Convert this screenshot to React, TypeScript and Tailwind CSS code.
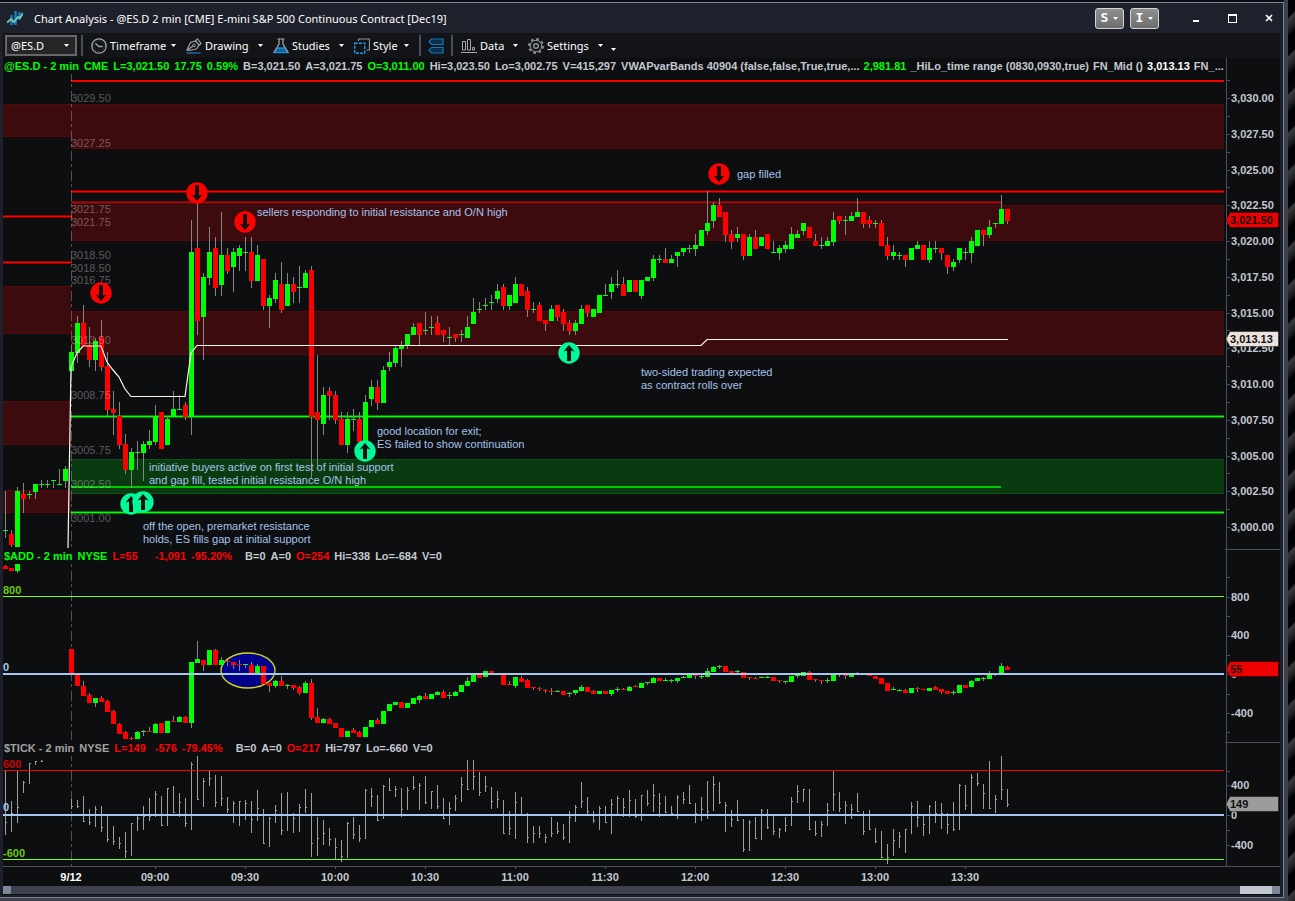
import React from 'react';

const BAR_STEP = 6;
const DAY_X = 71;

type Candle = { i: number; up: boolean; high: number; top: number; bottom: number; low: number };
type Bar = { i: number; high: number; low: number; close: number };

// Each entry is direction + high/top/bottom/low in chart coordinates
const parseCandles = (start: number, data: string): Candle[] =>
  data.trim().split(/\s+/).map((row, n) => {
    const [high, top, bottom, low] = row.slice(1).split(',').map(Number);
    return { i: start + n, up: row[0] === 'u', high, top, bottom, low };
  });

const parseBars = (start: number, data: string): Bar[] =>
  data.trim().split(/\s+/).map((row, n) => {
    const [high, low, close] = row.split(',').map(Number);
    return { i: start + n, high, low, close };
  });

const esCandles = parseCandles(-11, `
  u491,530,531,538 d530,534,545,547 u487,491,547,547 d483,494,499,513 u491,494,495,499 u484,484,492,499
  u480,484,485,488 u480,484,485,488 u480,480,481,488 u469,484,485,485 u466,469,481,488
  u345,352,371,371 u316,323,353,363 d305,323,346,346 d327,345,360,367 u338,341,360,371 d320,337,367,371
  d352,366,410,416 d391,409,413,435 d402,416,445,449 d434,444,470,474 u448,452,470,488 u441,452,453,470
  u441,444,453,481 u430,441,445,449 u405,416,442,445 d412,412,449,449 u416,419,445,445 u391,409,417,417
  u395,409,410,410 d402,405,417,420 u220,252,417,435 d203,248,321,335 u273,277,317,360 u227,252,278,285
  d237,248,288,296 u212,255,285,296 d248,255,271,274 u248,252,267,292 u245,248,256,271 u237,252,253,271
  d237,252,281,288 u245,255,281,281 d259,259,306,310 u295,298,306,328 u273,280,299,303 d262,284,310,313
  u273,284,306,306 d277,284,292,303 u266,287,288,303 u270,273,288,288 d266,270,417,478 d355,412,420,466
  u387,395,424,435 d387,391,396,420 d391,395,420,424 d412,419,445,445 u412,419,445,453 u409,419,420,431
  d412,419,442,442 u395,402,441,441 u380,387,399,406 d380,387,403,410 u366,370,403,403 u352,362,367,371
  u345,348,363,367 u341,346,349,367 u334,334,345,349 u323,327,335,335 d323,323,335,345 u312,330,331,335
  u316,327,328,335 d316,323,335,335 d330,330,335,342 u327,337,338,345 d334,334,338,342 u330,334,335,342
  u316,327,338,338 u298,312,324,324 u302,309,310,313 u298,305,306,310 u295,302,303,310 u284,291,299,303
  d284,287,306,310 u295,295,306,310 u277,284,303,303 d284,284,296,296 d287,291,310,317 u302,309,310,313
  d302,305,321,321 d320,320,324,331 u305,309,321,321 d305,305,317,321 d309,312,324,331 d320,323,331,335
  u320,323,331,335 u305,309,324,324 d305,305,313,317 u309,309,317,317 u295,295,313,313 u284,295,296,296
  u277,284,292,299 u270,284,285,288 d277,284,296,296 u280,280,292,292 d280,280,292,292 u280,280,296,299
  u277,277,281,281 u255,259,278,281 u255,259,260,263 d248,259,263,263 u255,259,263,263 u252,252,256,267
  u248,248,252,256 u245,248,249,253 u234,245,249,256 u230,230,246,246 u191,223,231,235 u202,205,221,228
  d198,205,217,217 d212,212,235,242 d230,234,242,249 u227,234,238,242 d234,234,256,260 u234,237,256,256
  d230,237,249,249 u237,237,246,246 d234,234,249,249 u241,252,253,253 u245,248,253,260 u241,245,249,253
  u227,234,249,249 u230,234,238,238 u223,223,231,235 d227,227,238,238 d234,241,246,246 u237,245,246,249
  u237,241,246,246 u212,220,242,246 d216,216,221,224 u216,220,221,235 u212,216,221,221 u198,212,217,217
  d212,212,224,228 d216,220,224,228 u220,223,224,228 d220,223,246,246 d237,245,256,260 u245,252,256,260
  u252,255,256,260 d255,255,260,267 u248,248,260,260 u241,245,249,249 d245,245,260,260 u241,248,260,263
  u241,248,249,253 d248,248,253,260 d255,255,267,274 u259,262,267,271 u248,248,260,263 u248,252,253,260
  u237,241,253,263 u230,230,246,246 d230,230,235,246 u220,227,235,238 u223,223,224,228 u195,209,224,224
  d209,209,221,224
`);

const addCandles = [
  ...parseCandles(-11, 'd565,566,569,569 d568,568,571,571 u563,563,571,573'),
  ...parseCandles(0, `
  d649,649,674,674 d674,675,686,686 d681,686,696,696 d693,695,703,703 u698,698,703,707 d696,698,702,702
  d700,701,712,712 d710,711,724,724 d723,724,734,734 d731,732,739,739 d737,738,739,740 u731,732,739,739
  u730,731,732,736 d727,731,732,732 u723,724,733,733 d723,723,733,733 u721,721,733,733 d716,721,722,722
  u716,717,722,722 d716,717,723,723 u662,662,723,728 u641,659,663,663 d660,660,665,671 u650,650,665,665
  d649,650,665,665 u657,660,665,665 d660,661,662,666 d662,662,665,669 d660,664,665,671 u664,664,665,668
  d662,665,673,673 u664,666,673,673 d666,666,684,684 d683,683,686,692 u680,681,686,688 d676,681,686,686
  u684,685,686,689 d685,685,688,690 d686,687,693,695 u681,683,693,693 d679,683,718,720 d708,717,723,723
  u718,719,723,723 d718,719,724,724 d723,723,728,728 d728,728,737,737 u731,731,737,737 d728,730,733,733
  d731,732,737,737 u727,727,737,737 u720,720,727,727 d718,720,724,724 u711,711,724,724 u704,704,711,711
  u702,702,705,705 d702,702,708,708 u703,703,708,708 u698,698,704,704 u695,696,700,703 d693,696,699,699
  u694,694,699,699 u691,692,695,695 d690,692,698,698 u692,695,696,699 u691,692,696,696 u685,685,692,692
  u677,681,686,686 u674,675,682,682 d675,675,678,678 u671,671,677,677 d671,671,674,674 d674,674,675,675
  d674,675,685,685 d681,684,685,685 u677,677,686,688 d676,678,682,682 d679,680,688,688 d687,687,688,690
  d687,688,689,691 d689,690,691,693 d688,691,692,695 u690,691,692,692 d691,691,695,695 u692,693,694,697
  u690,690,693,695 u685,687,691,691 d687,687,692,692 d690,691,694,694 u691,691,694,694 d691,691,694,694
  u690,690,694,696 u687,689,690,692 d688,689,690,690 u686,687,691,691 d685,686,687,687 u683,683,688,688
  u682,682,683,685 u677,678,683,683 d678,678,681,681 u678,680,681,681 u679,680,681,683 u678,678,681,683
  u676,677,678,678 u674,675,678,678 d675,675,676,679 u675,676,677,679 u668,671,677,677 u666,667,672,672
  u665,666,667,669 d666,666,672,672 d671,671,674,674 u670,671,672,673 d672,672,678,678 d677,677,678,680
  d677,678,679,679 u677,677,678,678 u676,677,678,678 d677,677,681,681 d680,680,681,683 u681,681,682,684
  u676,676,682,682 u675,675,676,678 u672,672,676,676 d671,672,680,680 d679,679,680,682 d680,680,681,684
  u678,680,681,683 u675,675,681,681 d674,674,675,677 d675,675,676,679 u675,675,677,677 u672,674,675,675
  u674,674,675,675 d675,675,676,676 d676,676,679,679 d678,678,684,684 d683,683,691,691 u687,689,690,690
  u689,690,691,691 d689,690,693,693 u688,688,693,693 d687,688,689,692 d689,689,690,690 u688,688,691,691
  d686,687,690,690 d689,689,692,694 d691,691,694,694 u690,692,693,695 u685,685,693,693 d685,685,688,688
  u680,681,687,687 u678,678,681,681 u677,678,679,681 u671,675,679,679 u674,674,675,676 u663,666,674,674
  d666,667,670,670
`),
];

const tickBars = [
  ...parseBars(-11, '771,835,822 801,832,813 771,823,807 781,793,782 763,784,763 761,765,761 760,762,761'),
  ...parseBars(0, `
  799,809,806 800,808,806 796,822,821 809,825,822 806,827,809 806,832,827 816,842,839 826,845,841 837,849,843
  832,858,851 823,856,823 816,831,818 806,830,816 798,821,816 791,817,794 796,826,825 788,826,788 786,813,812
  793,817,802 798,827,823 762,830,764 756,800,799 778,807,781 771,786,778 775,807,802 776,806,798 797,813,809
  801,823,803 801,826,801 800,820,803 801,833,819 790,821,808 809,844,843 817,847,818 805,823,810 793,835,830
  792,831,814 813,833,818 804,832,807 789,813,807 793,857,843 817,856,838 820,845,833 828,846,839 838,859,847
  840,862,856 822,858,823 817,839,834 825,842,838 789,839,790 788,807,796 795,821,820 785,819,786 778,791,790
  786,797,789 788,817,809 787,810,790 776,790,787 783,810,785 776,804,802 791,809,791 785,809,806 798,819,818
  802,825,808 795,811,798 777,802,784 760,790,789 760,790,776 772,796,792 776,792,786 787,809,801 791,808,799
  800,834,833 811,835,828 792,839,802 797,815,814 813,843,837 826,843,833 826,838,833 834,843,837 817,837,833
  822,834,831 824,840,837 811,843,817 805,822,807 782,808,801 797,815,811 811,823,820 806,830,808 806,823,822
  799,834,804 796,815,798 798,817,807 790,817,800 799,818,816 795,821,795 790,806,803 784,812,795 793,817,803
  796,813,812 806,814,813 795,819,797 792,804,799 785,804,803 803,823,813 797,821,809 781,819,811 776,811,784
  782,804,802 802,832,805 810,827,819 800,821,820 819,852,849 820,851,822 817,839,838 809,840,810 809,829,827
  815,835,831 828,838,829 817,832,825 797,826,801 785,803,791 789,802,789 789,830,829 821,836,833 821,837,824
  803,826,810 771,811,794 792,812,808 801,824,805 804,819,809 793,812,811 811,835,831 810,830,829 828,843,841
  831,858,857 844,864,857 829,856,840 832,848,836 829,853,829 802,834,806 801,827,817 815,836,824 805,834,806
  801,823,813 803,829,813 813,834,824 802,831,829 784,830,785 785,810,805 774,815,777 773,786,783 784,809,793
  761,809,808 795,813,799 756,800,789 789,807,804
`),
];

const levels = [
  { label: '3029.50', y: 102 },
  { label: '3027.25', y: 147 },
  { label: '3021.75', y: 213 },
  { label: '3021.75', y: 226 },
  { label: '3018.50', y: 259 },
  { label: '3018.50', y: 272 },
  { label: '3016.75', y: 284 },
  { label: '3013.50', y: 344 },
  { label: '3008.75', y: 399 },
  { label: '3005.75', y: 454 },
  { label: '3002.50', y: 488 },
  { label: '3001.00', y: 522 },
];

const notes = [
  { x: 257, y: 216, text: 'sellers responding to initial resistance and O/N high' },
  { x: 737, y: 178, text: 'gap filled' },
  { x: 641, y: 376, text: 'two-sided trading expected' },
  { x: 641, y: 389, text: 'as contract rolls over' },
  { x: 377, y: 435, text: 'good location for exit;' },
  { x: 377, y: 448, text: 'ES failed to show continuation' },
  { x: 149, y: 471, text: 'initiative buyers active on first test of initial support' },
  { x: 149, y: 484, text: 'and gap fill, tested initial resistance O/N high' },
  { x: 143, y: 530, text: 'off the open, premarket resistance' },
  { x: 143, y: 543, text: 'holds, ES fills gap at initial support' },
];

const markers = [
  { x: 197, y: 193, down: true },
  { x: 245, y: 222, down: true },
  { x: 101, y: 293, down: true },
  { x: 719, y: 174, down: true },
  { x: 131, y: 504, down: false },
  { x: 143, y: 502, down: false },
  { x: 365, y: 451, down: false },
  { x: 569, y: 353, down: false },
];

const priceLabels = [
  '3,030.00', '3,027.50', '3,025.00', '3,022.50', '3,020.00', '3,017.50', '3,015.00',
  '3,012.50', '3,010.00', '3,007.50', '3,005.00', '3,002.50', '3,000.00',
];

const hours = ['09:00', '09:30', '10:00', '10:30', '11:00', '11:30', '12:00', '12:30', '13:00', '13:30'];

type Field = { text: string; className: string };

const esFields: Field[] = [
  { text: '@ES.D - 2 min', className: 'text-[#00ff00]' },
  { text: 'CME', className: 'text-[#00ff00]' },
  { text: 'L=3,021.50', className: 'text-[#00ff00]' },
  { text: '17.75', className: 'text-[#00ff00]' },
  { text: '0.59%', className: 'text-[#00ff00]' },
  { text: 'B=3,021.50', className: 'text-[#c4c8d0]' },
  { text: 'A=3,021.75', className: 'text-[#c4c8d0]' },
  { text: 'O=3,011.00', className: 'text-[#00ff00]' },
  { text: 'Hi=3,023.50', className: 'text-[#c4c8d0]' },
  { text: 'Lo=3,002.75', className: 'text-[#c4c8d0]' },
  { text: 'V=415,297', className: 'text-[#c4c8d0]' },
];

const studyFields: Field[] = [
  { text: 'VWAPvarBands 40904 (false,false,True,true,...', className: 'text-[#c4c8d0]' },
  { text: '2,981.81', className: 'text-[#00ff00]' },
  { text: '_HiLo_time range (0830,0930,true)', className: 'text-[#c4c8d0]' },
  { text: 'FN_Mid ()', className: 'text-[#c4c8d0]' },
  { text: '3,013.13', className: 'text-white' },
  { text: 'FN_...', className: 'text-[#c4c8d0]' },
];

const addFields: Field[] = [
  { text: '$ADD - 2 min', className: 'text-[#00ff00]' },
  { text: 'NYSE', className: 'text-[#00ff00]' },
  { text: 'L=55', className: 'text-[#ff0000]' },
  { text: '-1,091', className: 'ml-3 text-[#ff0000]' },
  { text: '-95.20%', className: 'text-[#ff0000]' },
  { text: 'B=0', className: 'ml-2 text-[#c4c8d0]' },
  { text: 'A=0', className: 'text-[#c4c8d0]' },
  { text: 'O=254', className: 'text-[#ff0000]' },
  { text: 'Hi=338', className: 'text-[#c4c8d0]' },
  { text: 'Lo=-684', className: 'text-[#c4c8d0]' },
  { text: 'V=0', className: 'text-[#c4c8d0]' },
];

const tickFields: Field[] = [
  { text: '$TICK - 2 min', className: 'text-[#a0a0a0]' },
  { text: 'NYSE', className: 'text-[#a0a0a0]' },
  { text: 'L=149', className: 'text-[#ff0000]' },
  { text: '-576', className: 'ml-1 text-[#ff0000]' },
  { text: '-79.45%', className: 'text-[#ff0000]' },
  { text: 'B=0', className: 'ml-2 text-[#c4c8d0]' },
  { text: 'A=0', className: 'text-[#c4c8d0]' },
  { text: 'O=217', className: 'text-[#ff0000]' },
  { text: 'Hi=797', className: 'text-[#c4c8d0]' },
  { text: 'Lo=-660', className: 'text-[#c4c8d0]' },
  { text: 'V=0', className: 'text-[#c4c8d0]' },
];

const FieldRow: React.FC<{ fields: Field[]; studies?: Field[] }> = ({ fields, studies }) => (
  <div className="flex h-4 items-center gap-[5px] pl-px text-[11px] leading-4 font-bold whitespace-nowrap">
    {fields.map((field) => (
      <span key={field.text} className={field.className}>{field.text}</span>
    ))}
    {studies && (
      <div className="flex gap-1">
        {studies.map((field) => (
          <span key={field.text} className={field.className}>{field.text}</span>
        ))}
      </div>
    )}
  </div>
);

const Candles: React.FC<{ data: Candle[] }> = ({ data }) => (
  <g shapeRendering="crispEdges">
    {data.map((c) => {
      const x = DAY_X + c.i * BAR_STEP;
      return (
        <g key={c.i}>
          <rect x={x} y={c.high} width="1" height={c.low - c.high} fill="#858585" />
          <rect x={x - 2} y={c.top} width="5" height={c.bottom - c.top} fill={c.up ? '#00ff00' : '#ff0000'} />
        </g>
      );
    })}
  </g>
);

const Band: React.FC<{ x: number; y: number; width: string | number; height: number; green?: boolean }> = ({ x, y, width, height, green }) => (
  <g shapeRendering="crispEdges">
    <rect x={x} y={y} width={width} height={height} fill={green ? '#0f5019' : '#56080c'} />
    <rect x={x} y={y + 1} width={width} height={height - 2} fill={green ? '#0a3b10' : '#3c0b0e'} />
  </g>
);

const Level: React.FC<{ x1: number; x2: number | string; y: number; color: string; edge: string }> = ({ x1, x2, y, color, edge }) => (
  <g shapeRendering="crispEdges">
    <line x1={x1} x2={x2} y1={y + 0.5} y2={y + 0.5} stroke={edge} strokeWidth="3" />
    <line x1={x1} x2={x2} y1={y + 0.5} y2={y + 0.5} stroke={color} />
  </g>
);

const DayLine = () => (
  <line x1="71.5" x2="71.5" y1="71" y2="866" stroke="#fff" strokeOpacity="0.28" strokeDasharray="10 3 3 4" />
);

const PriceTag: React.FC<{ y: number; fill: string; label: string }> = ({ y, fill, label }) => (
  <g>
    <path d={`M1226 ${y}L1230 ${y - 7.5}H1278.500V${y + 7.5}H1230Z`} fill={fill} stroke="#000" strokeOpacity="0.4" />
    <text x="1230" y={y + 4} fill="#111">{label}</text>
  </g>
);

const Caret = () => (
  <svg className="shrink-0" width="5" height="3" viewBox="0 0 5 3" fill="currentColor" aria-hidden="true"><path d="M0 0h5L2.500 3z" /></svg>
);

const ClockIcon = () => (
  <svg className="shrink-0" width="16" height="16" viewBox="0 0 16 16" fill="none" stroke="#a3a7ad" aria-hidden="true">
    <circle cx="8" cy="8" r="7.200" strokeWidth="1.300" />
    <circle cx="8" cy="8" r="5.200" stroke="#5d6167" strokeDasharray="1 1.700" />
    <path d="M4.500 5.500L8 8.500h3.500" strokeWidth="1.400" />
  </svg>
);

const PenIcon = () => (
  <svg className="shrink-0" width="16" height="16" viewBox="0 0 16 16" fill="none" stroke="#9ea2a8" aria-hidden="true">
    <path d="M1 12L4.500 4.500L9.500 3L13 7L10.500 11L3 12.500zM9 3L11.500 1L15 5.500L13 7.500M1.500 12L7 8" strokeWidth="1.200" />
    <circle cx="8" cy="7.500" r="1.300" />
    <path d="M0.500 15h14" stroke="#1c7fc4" strokeWidth="1.200" />
  </svg>
);

const FlaskIcon = () => (
  <svg className="shrink-0" width="16" height="16" viewBox="0 0 16 16" fill="none" aria-hidden="true">
    <path d="M3.500 10h9l2.500 4.500H1z" fill="#12659c" />
    <path d="M4.500 1h7M6 1v5L1 14.500h14L10 6V1" stroke="#a8adb3" strokeWidth="1.200" />
    <path d="M0.500 14.600h15M3.500 10h9" stroke="#1c8fd8" strokeWidth="1.400" />
  </svg>
);

const StyleIcon = () => (
  <svg className="shrink-0" width="16" height="16" viewBox="0 0 16 16" fill="none" aria-hidden="true">
    <path d="M4.500 3V1h11v11h-3" stroke="#8b8f96" strokeWidth="1.200" />
    <rect x="0.700" y="5.200" width="10" height="10" stroke="#1c9cea" strokeWidth="1.400" strokeDasharray="3 1.300" />
  </svg>
);

const LinkIcon = () => (
  <svg width="16" height="16" viewBox="0 0 16 16" fill="#0b2f4a" stroke="#1579bd" strokeWidth="1.200" aria-hidden="true">
    <path d="M3.500 1H15v5.500H3.500L1 3.700zM3.500 9.500H15V15H3.500L1 12.200z" />
  </svg>
);

const DataIcon = () => (
  <svg className="shrink-0" width="16" height="16" viewBox="0 0 16 16" fill="none" stroke="#a3a7ad" aria-hidden="true">
    <path d="M1.500 12V3.500h3V12zM6.500 12V1.500h3V12zM11.500 12V9.500h2V12z" />
    <path d="M0 14.500h16" />
  </svg>
);

const GearIcon = () => (
  <svg className="shrink-0" width="16" height="16" viewBox="0 0 16 16" fill="none" stroke="#8f9399" aria-hidden="true">
    <circle cx="8" cy="8" r="7" strokeWidth="1.800" strokeDasharray="2.750 2.750" />
    <circle cx="8" cy="8" r="5.700" />
    <circle cx="8" cy="8" r="2.300" strokeWidth="1.400" />
  </svg>
);

const tools = [
  { name: 'Timeframe', icon: <ClockIcon />, width: 'w-[95px]' },
  { name: 'Drawing', icon: <PenIcon />, width: 'w-[87px]' },
  { name: 'Studies', icon: <FlaskIcon />, width: 'w-[81px]' },
  { name: 'Style', icon: <StyleIcon />, width: 'w-[65px]' },
];

const dataTools = [
  { name: 'Data', icon: <DataIcon />, width: 'w-[67px]' },
  { name: 'Settings', icon: <GearIcon />, width: 'w-[85px]' },
];

const ToolButton: React.FC<{ name: string; icon: React.ReactNode; width: string }> = ({ name, icon, width }) => (
  <button type="button" className={`flex items-center gap-[3px] pr-[10px] ${width}`}>
    {icon}
    <span className="mr-auto">{name}</span>
    <Caret />
  </button>
);

const TitleBar = () => (
  <header className="flex h-[30px] items-center bg-[#1e212b] pr-[10px] pl-[7px] text-white">
    <svg width="16" height="16" viewBox="0 0 16 16" aria-hidden="true">
      <path d="M4.500 5v10M8.500 1v14M12.500 2v8" stroke="#1281b8" strokeWidth="2.500" />
      <path d="M0 12.500L4 9l3 3l4-5l2 1l3-5" fill="none" stroke="#6fc7b5" strokeWidth="2" />
    </svg>
    <h1 className="ml-[11px] pt-px text-[11px] leading-4 whitespace-nowrap">
      Chart Analysis - @ES.D 2 min [CME] E-mini S&amp;P 500 Continuous Contract [Dec19]
    </h1>
    <div className="ml-auto flex items-center gap-[6px]">
      {['S', 'I'].map((letter) => (
        <button
          key={letter}
          type="button"
          className="flex h-[21px] w-[29px] items-center justify-center gap-[5px] rounded-[3px] border border-[#d5d5d5] bg-linear-to-b from-[#8f9191] to-[#6c6e6e] font-['DejaVu_Sans_Mono',monospace] text-[13px] leading-4 font-bold"
        >
          {letter}
          <Caret />
        </button>
      ))}
    </div>
    <div className="ml-[33px] flex items-center gap-[28px]">
      <button type="button" aria-label="Minimize">
        <svg width="8" height="10" viewBox="0 0 8 10"><path d="M1 7h6v2H1z" fill="#fff" /></svg>
      </button>
      <button type="button" aria-label="Maximize">
        <svg width="9" height="9" viewBox="0 0 9 9"><path d="M0 0h9v9H0zM1 2v6h7V2z" fill="#fff" fillRule="evenodd" /></svg>
      </button>
      <button type="button" aria-label="Close">
        <svg width="8" height="8" viewBox="0 0 8 8"><path d="M1 1l6 6M7 1L1 7" stroke="#fff" strokeWidth="1.600" /></svg>
      </button>
    </div>
  </header>
);

const Toolbar = () => (
  <nav className="flex h-[25px] items-center bg-[#131418] pl-[2px] text-[11px] leading-4 text-white">
    <label className="relative flex items-center">
      <span className="sr-only">Symbol</span>
      <select className="h-[21px] w-[72px] appearance-none border-2 border-[#686868] bg-[#262628] pl-1 leading-4">
        <option>@ES.D</option>
      </select>
      <span className="pointer-events-none absolute right-[8px]"><Caret /></span>
    </label>
    <span className="mr-2 ml-1 h-[21px] w-[2px] bg-[#4a4f59]" />
    {tools.map((tool) => <ToolButton key={tool.name} {...tool} />)}
    <span className="mr-[7px] h-[21px] w-[2px] bg-[#4a4f59]" />
    <button type="button" aria-label="Link"><LinkIcon /></button>
    <span className="mr-2 ml-[7px] h-[21px] w-[2px] bg-[#4a4f59]" />
    {dataTools.map((tool) => <ToolButton key={tool.name} {...tool} />)}
    <button type="button" aria-label="More" className="mt-2 -ml-[2px]"><Caret /></button>
  </nav>
);

const PricePane = () => (
  <svg className="block h-[474px] w-full">
    <g transform="translate(-3 -74)">
      <Band x={3} y={104} width={68} height={33} />
      <Band x={3} y={286} width={68} height={48} />
      <Band x={3} y={401} width={68} height={44} />
      <Band x={3} y={490} width={68} height={23} />
      <Band x={71} y={104} width="100%" height={45} />
      <Band x={71} y={205} width="100%" height={36} />
      <Band x={71} y={311} width="100%" height={44} />
      <Band x={71} y={459} width="100%" height={35} green />

      <line x1="71" x2="110%" y1="81" y2="81" stroke="#ff0000" strokeWidth="2" />
      <Level x1={71} x2="110%" y={191} color="#ff0000" edge="#8a0508" />
      <Level x1={71} x2={1001} y={202} color="#960a0d" edge="#7c0a0d" />
      <Level x1={3} x2={72} y={216} color="#ff0000" edge="#8a0508" />
      <Level x1={3} x2={72} y={262} color="#ff0000" edge="#8a0508" />
      <Level x1={71} x2="110%" y={416} color="#00ff00" edge="#067a0c" />
      <line x1="71" x2="1001" y1="487" y2="487" stroke="#00c800" strokeWidth="2" />
      <Level x1={71} x2="110%" y={512} color="#00ff00" edge="#067a0c" />
      <DayLine />
      <Candles data={esCandles} />

      <g fill="#fff" fillOpacity="0.32">
        {levels.map((level) => <text key={level.y} x="71" y={level.y}>{level.label}</text>)}
      </g>
      <polyline
        points="68,548 71,367 77,353 83,346 101,346 107,362 113,370 119,377 125,389 131,396.500 185,396.500 191,353 197,345.500 701,345.500 707,339.500 1008,339.500"
        fill="none"
        stroke="#fff5ec"
        strokeWidth="1.200"
      />
      {markers.map((m) => (
        <g key={`${m.x}-${m.y}`} transform={`translate(${m.x} ${m.y})`}>
          <circle r="10.700" fill={m.down ? '#ff0000' : '#00fa9a'} />
          <path d="M-2 -8H2V2.500L5.500 1.500L0 8L-5.500 1.500L-2 2.500Z" fill="#10100f" transform={m.down ? undefined : 'scale(1 -1)'} />
        </g>
      ))}
      <g fill="#a6c3ec">
        {notes.map((note) => <text key={note.text} x={note.x} y={note.y}>{note.text}</text>)}
      </g>
    </g>
  </svg>
);

const AddPane = () => (
  <svg className="block h-[176px] w-full">
    <g transform="translate(-3 -564)">
      <DayLine />
      <line x1="3" x2="110%" y1="596.500" y2="596.500" stroke="#7cff00" />
      <ellipse cx="248" cy="670.500" rx="27" ry="17.500" fill="#00008b" stroke="#d6d61e" strokeWidth="1.300" />
      <Candles data={addCandles} />
      <line x1="3" x2="110%" y1="674" y2="674" stroke="#a6c8f0" strokeWidth="2" />
      <g className="font-bold">
        <text x="3" y="594" fill="#6fc80c">800</text>
        <text x="3" y="671" fill="#a6c8f0">0</text>
      </g>
    </g>
  </svg>
);

const TickPane = () => (
  <svg className="block h-[110px] w-full">
    <g transform="translate(-3 -756)">
      <DayLine />
      <g fill="#a0a0a0" shapeRendering="crispEdges">
        {tickBars.map((b) => (
          <path key={b.i} d={`M${DAY_X + b.i * BAR_STEP} ${b.high}h1V${b.close}h1v1h-1V${b.low}h-1z`} />
        ))}
      </g>
      <line x1="3" x2="110%" y1="770.500" y2="770.500" stroke="#ff0000" />
      <line x1="3" x2="110%" y1="815" y2="815" stroke="#a6c8f0" strokeWidth="2" />
      <line x1="3" x2="110%" y1="859.500" y2="859.500" stroke="#7cff00" />
      <g className="font-bold">
        <text x="3" y="768" fill="#d00000">600</text>
        <text x="3" y="811" fill="#a6c8f0">0</text>
        <text x="3" y="857" fill="#6fc80c">-600</text>
      </g>
    </g>
  </svg>
);

const indicatorTicks = [577, 597, 616, 636, 655, 674, 694, 713, 732, 771, 785, 815, 830, 845];

const indicatorLabels = [
  { text: '800', y: 601 },
  { text: '400', y: 639 },
  { text: '0', y: 678 },
  { text: '-400', y: 717 },
  { text: '400', y: 789 },
  { text: '0', y: 819 },
  { text: '-400', y: 849 },
];

const ValueAxis = () => (
  <svg className="block h-[808px] w-[55px] shrink-0 font-bold">
    <g transform="translate(-1225 -58)">
      <g stroke="#4a4f59" shapeRendering="crispEdges">
        <path d="M1226.500 58V866M1225 549.500H1280M1225 742.500H1280M1226 80.500h4" fill="none" />
        {priceLabels.map((label, n) => (
          <path key={label} d={`M1226 ${98.5 + Math.round(n * 35.75)}h4${n ? `M1226 ${80.5 + Math.round(n * 35.75)}h4` : ''}`} />
        ))}
        {indicatorTicks.map((y) => <path key={y} d={`M1226 ${y + 0.5}h4`} />)}
      </g>
      <g fill="#c4c8d0">
        {priceLabels.map((label, n) => (
          <text key={label} x="1231" y={102 + Math.round(n * 35.75)}>{label}</text>
        ))}
        {indicatorLabels.map((label) => <text key={label.y} x="1231" y={label.y}>{label.text}</text>)}
      </g>
      <PriceTag y={220} fill="#ee0000" label="3,021.50" />
      <PriceTag y={339} fill="#eae2dc" label="3,013.13" />
      <PriceTag y={669} fill="#ee0000" label="55" />
      <PriceTag y={804} fill="#9c9c9c" label="149" />
    </g>
  </svg>
);

const TimeAxis = () => (
  <svg className="block h-[20px] w-full font-bold">
    <g transform="translate(-3 -866)" textAnchor="middle" fill="#c4c8d0">
      <path d="M0 866.500H4000" stroke="#4a4f59" />
      <text x="71" y="881" fill="#fff">9/12</text>
      {hours.map((hour, n) => (
        <g key={hour}>
          <path d={`M${155.5 + n * 90} 866v3`} stroke="#4a4f59" />
          <text x={155 + n * 90} y="881">{hour}</text>
        </g>
      ))}
    </g>
  </svg>
);

const App: React.FC = () => {
  return (
    <div className="flex min-h-screen bg-black font-['Noto_Sans','Open_Sans',sans-serif]">
      <div className="flex min-w-0 flex-1 flex-col border-r-4 border-b-3 border-[#3d424e] bg-[#0b0d12] pt-[2px]">
        <div className="flex flex-1 flex-col border-t border-r border-b border-[#7c8494] bg-[#1e212b]">
          <TitleBar />
          <div className="mr-[3px] mb-[2px] ml-[3px] flex flex-1 flex-col bg-[#0d0e10]">
            <Toolbar />
            <main className="font-['Liberation_Sans',Arial,sans-serif] text-[11px]">
              <div className="flex">
                <div className="min-w-0 flex-1">
                  <FieldRow fields={esFields} studies={studyFields} />
                  <div className="pr-px"><PricePane /></div>
                  <FieldRow fields={addFields} />
                  <div className="pr-px"><AddPane /></div>
                  <FieldRow fields={tickFields} />
                  <div className="pr-px"><TickPane /></div>
                </div>
                <ValueAxis />
              </div>
              <TimeAxis />
            </main>
            <div className="flex h-2 bg-[#3d424e]">
              <button type="button" aria-label="Scroll left" className="w-2 bg-[#7c8899]" />
              <span className="ml-auto w-8 bg-[#c3c7d2]" />
              <button type="button" aria-label="Scroll right" className="w-2 bg-[#7c8899]" />
            </div>
          </div>
        </div>
      </div>
      <div className="w-[7px] bg-[repeating-linear-gradient(135deg,#000_0px,#050505_12px,#3a3a3a_14px,#1c1c1c_22px,#000_27px)]" />
    </div>
  );
};

export default App;
